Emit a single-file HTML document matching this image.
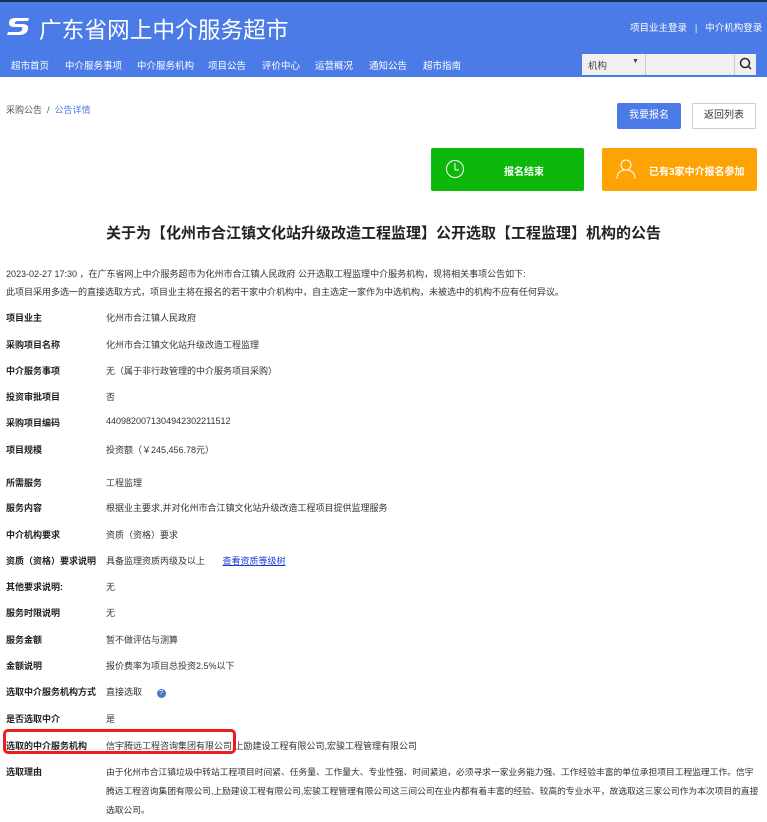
<!DOCTYPE html>
<html><head><meta charset="utf-8"><style>
*{margin:0;padding:0;box-sizing:border-box}
body{width:767px;height:822px;overflow:hidden;background:#fff;font-family:"Liberation Sans","Noto Sans CJK SC",sans-serif;color:#333;position:relative}
.a{position:absolute;white-space:nowrap}
.hd{position:absolute;left:0;top:0;width:767px;height:77px;background:#4a7be6;border-top:2px solid #1b2f5a}
.nav{font-size:9.5px;color:#fff;top:58px}
.row{position:absolute;left:0;font-size:9px}
.row .l{position:absolute;left:6px;font-weight:bold;color:#222;white-space:nowrap}
.row .v{position:absolute;left:106px;color:#333;white-space:nowrap}
</style></head><body>
<div class="hd"></div>
<svg class="a" style="left:5px;top:15px" width="28" height="22" viewBox="0 0 28 22"><path d="M24 3H10Q4 3 4 8Q4 12 10 12H16Q18 12 17 15Q16 17 13 17H3L2 20H14Q22 20 23 14Q24 9 17 9H11Q9 9 10 7Q11 6 13 6H23Z" fill="#fff"/></svg>
<div class="a" style="left:39px;top:12px;font-size:22.7px;color:#fff">广东省网上中介服务超市</div>
<div class="a" style="left:630px;top:20px;font-size:9.5px;color:#fff">项目业主登录 &nbsp;&nbsp;|&nbsp;&nbsp; 中介机构登录</div>
<div class="a nav" style="left:11px">超市首页</div>
<div class="a nav" style="left:65px">中介服务事项</div>
<div class="a nav" style="left:137px">中介服务机构</div>
<div class="a nav" style="left:208px">项目公告</div>
<div class="a nav" style="left:262px">评价中心</div>
<div class="a nav" style="left:315px">运营概况</div>
<div class="a nav" style="left:369px">通知公告</div>
<div class="a nav" style="left:423px">超市指南</div>
<div class="a" style="left:582px;top:54px;width:63px;height:21px;background:#f0f0f0;font-size:9.5px;color:#444;padding:4px 6px">机构<span style="position:absolute;left:50px;top:4px;font-size:7px">▼</span></div>
<div class="a" style="left:645px;top:54px;width:89px;height:21px;background:#f0f0f0;border-left:1px solid #ccc"></div>
<div class="a" style="left:734px;top:54px;width:22px;height:21px;background:#f0f0f0;border-left:1px solid #ccc"><svg width="22" height="21"><circle cx="10" cy="9" r="4.5" fill="none" stroke="#222" stroke-width="1.5"/><path d="M13 12L16 15" stroke="#222" stroke-width="1.5"/></svg></div>
<div class="a" style="left:6px;top:103px;font-size:9px;color:#555">采购公告 &nbsp;/&nbsp; <span style="color:#4a7be6">公告详情</span></div>
<div class="a" style="left:617px;top:103px;width:64px;height:26px;background:#4a7be6;color:#fff;font-size:10px;text-align:center;line-height:26px;border-radius:2px">我要报名</div>
<div class="a" style="left:692px;top:103px;width:64px;height:26px;border:1px solid #ccc;color:#333;font-size:10px;text-align:center;line-height:24px;border-radius:2px">返回列表</div>
<div class="a" style="left:431px;top:148px;width:153px;height:43px;background:#0db80d;border-radius:2px;color:#fff;font-size:10px;font-weight:bold"><svg style="position:absolute;left:14px;top:11px" width="20" height="20"><circle cx="10" cy="10" r="8.5" fill="none" stroke="#fff" stroke-width="1"/><path d="M10 4V11H14" fill="none" stroke="#fff"/></svg><span style="position:absolute;left:73px;top:15px">报名结束</span></div>
<div class="a" style="left:602px;top:148px;width:155px;height:43px;background:#fda404;border-radius:2px;color:#fff;font-size:10px;font-weight:bold"><svg style="position:absolute;left:13px;top:10px" width="22" height="22"><circle cx="11" cy="7" r="5" fill="none" stroke="#fff"/><path d="M2 21Q2 12 11 12Q20 12 20 21" fill="none" stroke="#fff"/></svg><span style="position:absolute;left:47px;top:15px">已有3家中介报名参加</span></div>
<div class="a" style="left:0;width:767px;top:222px;text-align:center;font-size:15px;font-weight:bold;color:#222">关于为【化州市合江镇文化站升级改造工程监理】公开选取【工程监理】机构的公告</div>
<div class="a" style="left:6px;top:267px;font-size:9px;color:#333">2023-02-27 17:30 ，在广东省网上中介服务超市为化州市合江镇人民政府 公开选取工程监理中介服务机构，现将相关事项公告如下:</div>
<div class="a" style="left:6px;top:285px;font-size:9px;color:#333">此项目采用多选一的直接选取方式，项目业主将在报名的若干家中介机构中，自主选定一家作为中选机构，未被选中的机构不应有任何异议。</div>
<div class="row" style="top:311px"><span class="l">项目业主</span><span class="v">化州市合江镇人民政府</span></div>
<div class="row" style="top:338px"><span class="l">采购项目名称</span><span class="v">化州市合江镇文化站升级改造工程监理</span></div>
<div class="row" style="top:364px"><span class="l">中介服务事项</span><span class="v">无（属于非行政管理的中介服务项目采购）</span></div>
<div class="row" style="top:390px"><span class="l">投资审批项目</span><span class="v">否</span></div>
<div class="row" style="top:416px"><span class="l">采购项目编码</span><span class="v">4409820071304942302211512</span></div>
<div class="row" style="top:443px"><span class="l">项目规模</span><span class="v">投资额（￥245,456.78元）</span></div>
<div class="row" style="top:476px"><span class="l">所需服务</span><span class="v">工程监理</span></div>
<div class="row" style="top:501px"><span class="l">服务内容</span><span class="v">根据业主要求,并对化州市合江镇文化站升级改造工程项目提供监理服务</span></div>
<div class="row" style="top:528px"><span class="l">中介机构要求</span><span class="v">资质（资格）要求</span></div>
<div class="row" style="top:554px"><span class="l">资质（资格）要求说明</span><span class="v">具备监理资质丙级及以上 &nbsp;&nbsp;&nbsp;&nbsp;&nbsp; <span style="color:#1a3ad8;text-decoration:underline">查看资质等级树</span></span></div>
<div class="row" style="top:580px"><span class="l">其他要求说明:</span><span class="v">无</span></div>
<div class="row" style="top:606px"><span class="l">服务时限说明</span><span class="v">无</span></div>
<div class="row" style="top:633px"><span class="l">服务金额</span><span class="v">暂不做评估与测算</span></div>
<div class="row" style="top:659px"><span class="l">金额说明</span><span class="v">报价费率为项目总投资2.5%以下</span></div>
<div class="row" style="top:685px"><span class="l">选取中介服务机构方式</span><span class="v">直接选取 <span style="display:inline-block;width:9px;height:9px;border-radius:50%;background:#4a74c8;color:#fff;font-size:7px;text-align:center;line-height:9px;margin-left:12px">?</span></span></div>
<div class="row" style="top:712px"><span class="l">是否选取中介</span><span class="v">是</span></div>
<div class="row" style="top:739px"><span class="l">选取的中介服务机构</span><span class="v">信宇腾远工程咨询集团有限公司,上励建设工程有限公司,宏骏工程管理有限公司</span></div>
<div class="a" style="left:3px;top:729px;width:233px;height:25px;border:3px solid #ee1c1c;border-radius:5px"></div>
<div class="row" style="top:765px"><span class="l">选取理由</span></div>
<div class="a" style="left:106px;top:763px;width:656px;white-space:normal;font-size:8.75px;line-height:19px;color:#333">由于化州市合江镇垃圾中转站工程项目时间紧、任务量、工作量大、专业性强、时间紧迫，必须寻求一家业务能力强、工作经验丰富的单位承担项目工程监理工作。信宇腾远工程咨询集团有限公司,上励建设工程有限公司,宏骏工程管理有限公司这三间公司在业内都有着丰富的经验、较高的专业水平，故选取这三家公司作为本次项目的直接选取公司。</div>
</body></html>
